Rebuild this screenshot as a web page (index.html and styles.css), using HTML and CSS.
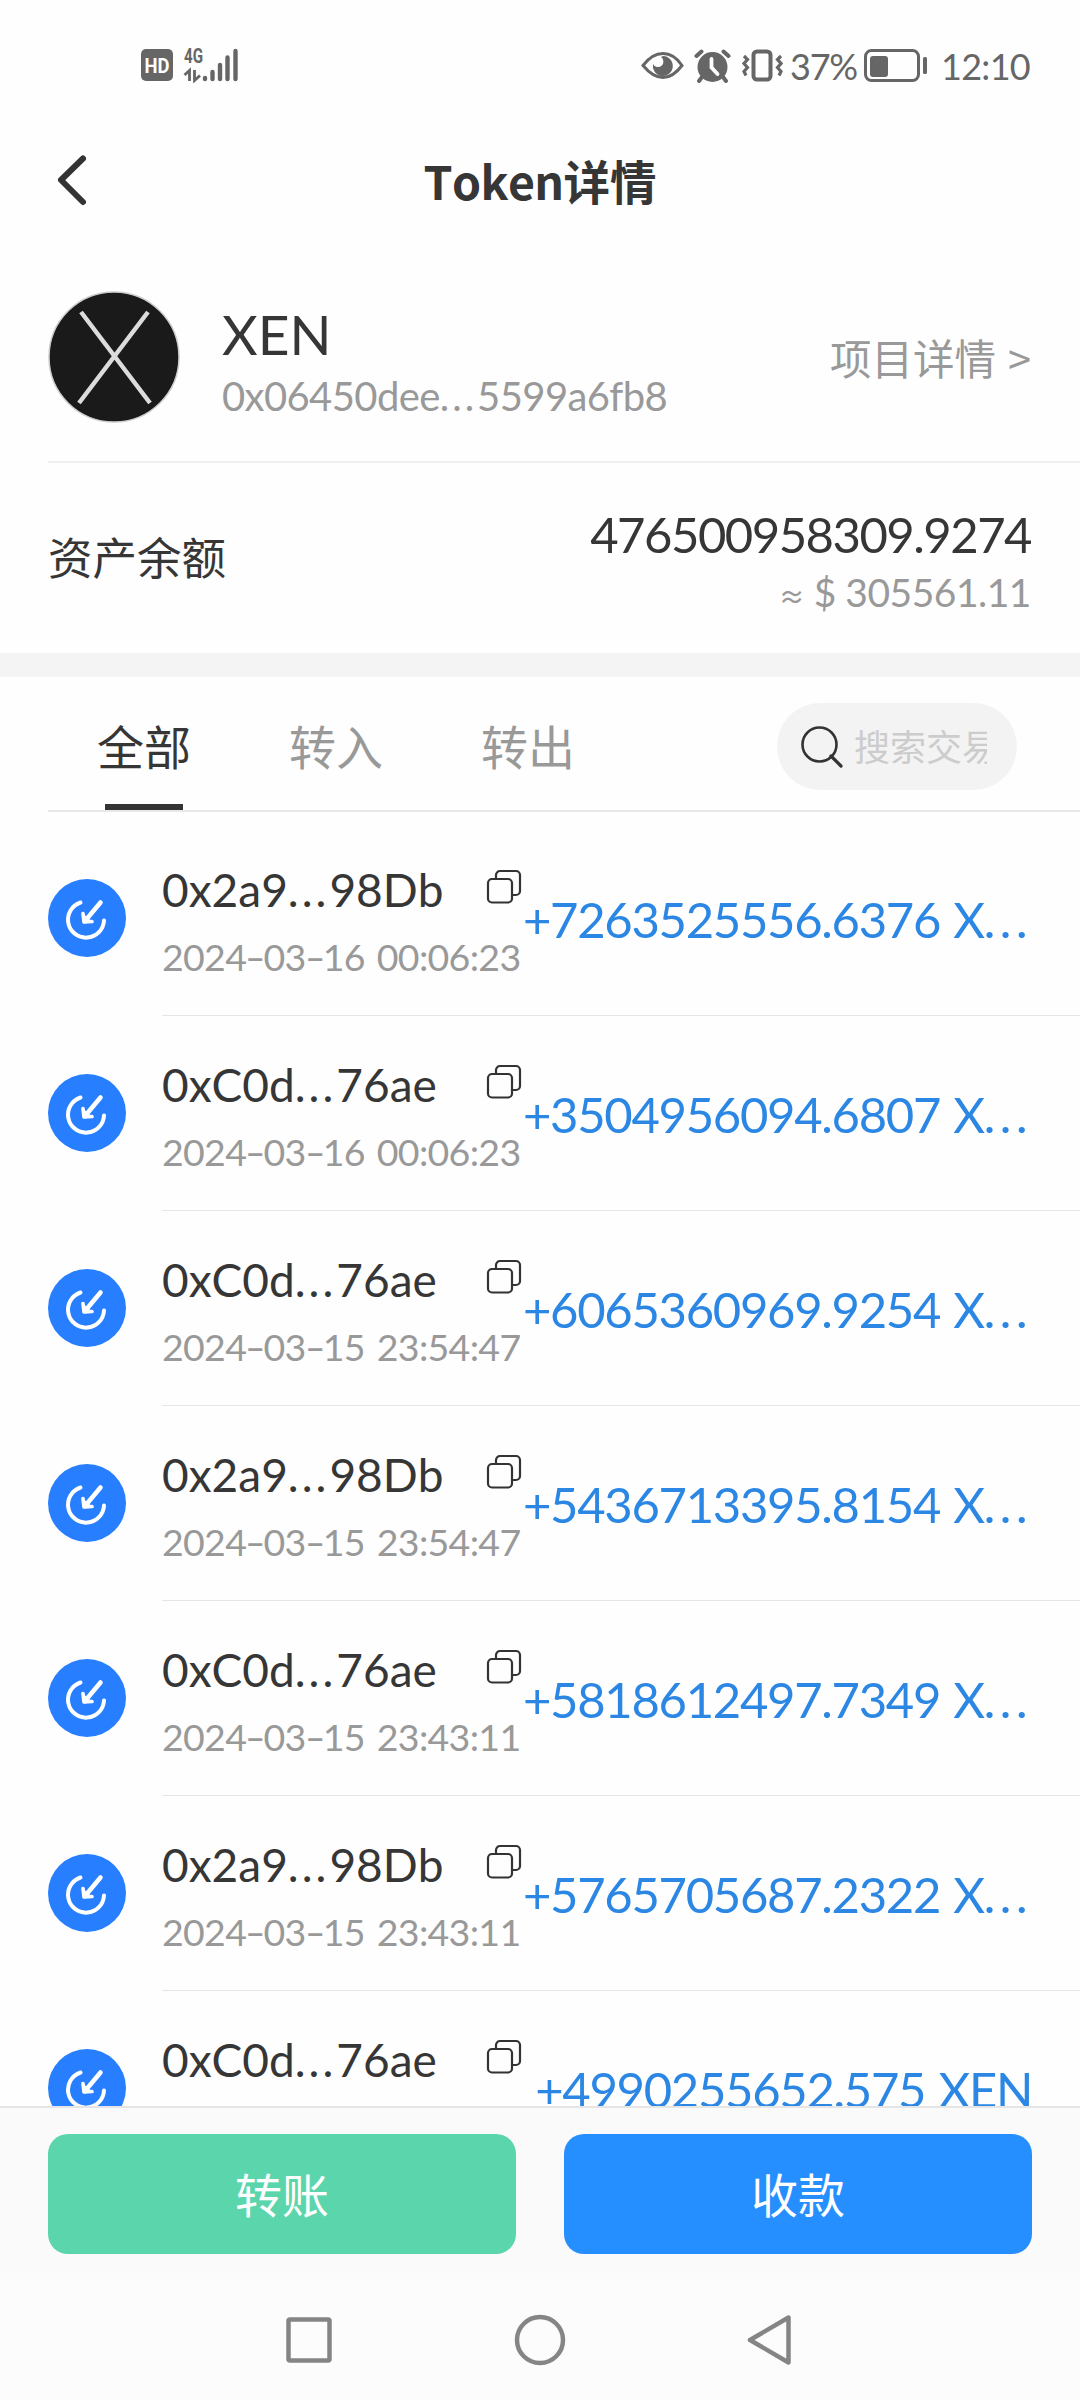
FILE: index.html
```html
<!DOCTYPE html>
<html lang="zh-CN">
<head>
  <meta charset="UTF-8" />
  <title>Token详情</title>
  <link rel="stylesheet" href="styles.css">
</head>
<body>
  <svg class="sprite" width="0" height="0">
    <symbol id="icon-in" viewBox="0 0 78 78">
      <circle cx="39" cy="39" r="39" fill="#277fff" />
      <path d="M32.5 23.5A18 18 0 1 0 56 41.500" fill="none" stroke="#fff" stroke-width="4" stroke-linecap="round" />
      <path d="M52.500 23.500L37 42" fill="none" stroke="#fff" stroke-width="4.500" stroke-linecap="round" />
      <path d="M35 34.500L36 43L44 42.500" fill="#fff" stroke="#fff" stroke-width="3.600" stroke-linecap="round" stroke-linejoin="round" />
    </symbol>
    <symbol id="icon-copy" viewBox="0 0 36 36">
      <g fill="none" stroke="#333" stroke-width="2.200">
        <rect x="2" y="10" width="24" height="23.500" rx="4" />
        <path d="M10 10V6a4 4 0 0 1 4-4h16a4 4 0 0 1 4 4v16a4 4 0 0 1-4 4h-4" />
      </g>
    </symbol>
  </svg>

  <div class="status-bar">
    <svg class="status-left" width="100" height="36" viewBox="0 0 100 36">
      <rect x="0" y="2" width="32" height="32" rx="5" fill="#666" />
      <text class="hd" x="3.500" y="25.500" textLength="25" lengthAdjust="spacingAndGlyphs">HD</text>
      <text class="net" x="43" y="16" textLength="19" lengthAdjust="spacingAndGlyphs">4G</text>
      <path d="M43.500 28L48.500 23.500V34M53.500 23V33.500L59 28.500" fill="none" stroke="#666" stroke-width="2.800" />
      <path d="M64 31v1M71.500 25v7M79 18v14M86.500 10.500v21.500M94.500 4v28" stroke="#666" stroke-width="4.400" stroke-linecap="round" />
    </svg>
    <div class="status-right">
      <svg width="142" height="36" viewBox="0 0 142 36">
        <path d="M2 18.500Q11 6.500 22 6.500T41 18.500Q32 30.500 22 30.500T2 18.500Z" fill="none" stroke="#666" stroke-width="3" />
        <path d="M22 9a10 10 0 1 1-10 8a5.500 5.500 0 1 0 8-7z" fill="#666" />
        <circle cx="71.500" cy="20" r="15" fill="#666" />
        <path d="M55.500 9L60.500 4.500M82.500 4.500L87.500 9M61 30L58 34M82 30L85 34" stroke="#666" stroke-width="4" stroke-linecap="round" />
        <path d="M70.500 12V20.500L76.500 27" fill="none" stroke="#fff" stroke-width="3.800" stroke-linecap="round" />
        <rect x="112.500" y="4.500" width="17" height="28" rx="3.500" fill="none" stroke="#666" stroke-width="4" />
        <path d="M103 9l3.500 3.500l-3.500 4l3.500 4l-3.500 4l2 4M140 9l-3.500 3.500l3.500 4l-3.500 4l3.500 4l-2 4" fill="none" stroke="#666" stroke-width="3.200" />
      </svg>
      <span class="percent">37%</span>
      <svg class="battery" width="64" height="36" viewBox="0 0 64 36">
        <rect x="1.500" y="3.500" width="53" height="30" rx="6" fill="none" stroke="#666" stroke-width="3" />
        <rect x="6" y="9" width="18" height="21" rx="3" fill="#666" />
        <rect x="59" y="10" width="4" height="17" rx="1.500" fill="#666" />
      </svg>
      <span class="clock">12:10</span>
    </div>
  </div>

  <div class="header">
    <svg class="back" width="32" height="54" viewBox="0 0 32 54">
      <path d="M27 5.500L5 27L27 49" fill="none" stroke="#333" stroke-width="6" stroke-linecap="round" stroke-linejoin="round" />
    </svg>
    <div class="title"><span class="title-en">Token</span>详情</div>
  </div>

  <div class="token">
    <svg class="logo" width="132" height="132" viewBox="0 0 132 132">
      <circle cx="66" cy="66" r="65" fill="#1a1a1a" stroke="#ccc" stroke-width="1.500" />
      <path d="M33 21L102 112M100 21L31 112" stroke="#dcdcdc" stroke-width="4.500" />
    </svg>
    <div class="token-info">
      <div class="token-name">XEN</div>
      <div class="token-address">0x06450dee<span class="dots">...</span>5599a6fb8</div>
    </div>
    <div class="project-link">项目详情<span class="gt">&gt;</span></div>
  </div>

  <div class="balance">
    <div class="balance-label">资产余额</div>
    <div class="balance-value">
      <div class="amount-total">476500958309.9274</div>
      <div class="amount-usd"><span class="approx">≈</span> $ 305561.11</div>
    </div>
  </div>

  <div class="tabs">
    <div class="tab active">全部</div>
    <div class="tab">转入</div>
    <div class="tab">转出</div>
    <div class="search">
      <svg width="44" height="44" viewBox="0 0 44 44">
        <path d="M31 31L41 41" stroke="#333" stroke-width="3.200" stroke-linecap="round" />
        <circle cx="19.500" cy="19.500" r="17" fill="none" stroke="#333" stroke-width="2.600" />
      </svg>
      <span class="placeholder">搜索交易</span>
    </div>
  </div>

  <div class="list">
    <div class="row">
      <svg class="row-icon"><use href="#icon-in" /></svg>
      <div class="row-body">
        <div class="row-info">
          <div class="row-top"><span class="address">0x2a9<span class="dots">...</span>98Db</span><svg class="copy"><use href="#icon-copy" /></svg></div>
          <div class="date">2024<i>-</i>03<i>-</i>16 00:06:23</div>
        </div>
        <div class="amount">+7263525556.6376 X<span class="dots">...</span></div>
      </div>
    </div>
    <div class="row">
      <svg class="row-icon"><use href="#icon-in" /></svg>
      <div class="row-body">
        <div class="row-info">
          <div class="row-top"><span class="address">0xC0d<span class="dots">...</span>76ae</span><svg class="copy"><use href="#icon-copy" /></svg></div>
          <div class="date">2024<i>-</i>03<i>-</i>16 00:06:23</div>
        </div>
        <div class="amount">+3504956094.6807 X<span class="dots">...</span></div>
      </div>
    </div>
    <div class="row">
      <svg class="row-icon"><use href="#icon-in" /></svg>
      <div class="row-body">
        <div class="row-info">
          <div class="row-top"><span class="address">0xC0d<span class="dots">...</span>76ae</span><svg class="copy"><use href="#icon-copy" /></svg></div>
          <div class="date">2024<i>-</i>03<i>-</i>15 23:54:47</div>
        </div>
        <div class="amount">+6065360969.9254 X<span class="dots">...</span></div>
      </div>
    </div>
    <div class="row">
      <svg class="row-icon"><use href="#icon-in" /></svg>
      <div class="row-body">
        <div class="row-info">
          <div class="row-top"><span class="address">0x2a9<span class="dots">...</span>98Db</span><svg class="copy"><use href="#icon-copy" /></svg></div>
          <div class="date">2024<i>-</i>03<i>-</i>15 23:54:47</div>
        </div>
        <div class="amount">+5436713395.8154 X<span class="dots">...</span></div>
      </div>
    </div>
    <div class="row">
      <svg class="row-icon"><use href="#icon-in" /></svg>
      <div class="row-body">
        <div class="row-info">
          <div class="row-top"><span class="address">0xC0d<span class="dots">...</span>76ae</span><svg class="copy"><use href="#icon-copy" /></svg></div>
          <div class="date">2024<i>-</i>03<i>-</i>15 23:43:11</div>
        </div>
        <div class="amount">+5818612497.7349 X<span class="dots">...</span></div>
      </div>
    </div>
    <div class="row">
      <svg class="row-icon"><use href="#icon-in" /></svg>
      <div class="row-body">
        <div class="row-info">
          <div class="row-top"><span class="address">0x2a9<span class="dots">...</span>98Db</span><svg class="copy"><use href="#icon-copy" /></svg></div>
          <div class="date">2024<i>-</i>03<i>-</i>15 23:43:11</div>
        </div>
        <div class="amount">+5765705687.2322 X<span class="dots">...</span></div>
      </div>
    </div>
    <div class="row">
      <svg class="row-icon"><use href="#icon-in" /></svg>
      <div class="row-body">
        <div class="row-info">
          <div class="row-top"><span class="address">0xC0d<span class="dots">...</span>76ae</span><svg class="copy"><use href="#icon-copy" /></svg></div>
        </div>
        <div class="amount">+4990255652.575 XEN</div>
      </div>
    </div>
  </div>

  <div class="actions">
    <button class="btn btn-send">转账</button>
    <button class="btn btn-receive">收款</button>
  </div>

  <div class="nav-bar">
    <svg width="52" height="52" viewBox="0 0 52 52"><rect x="5.500" y="5.500" width="41" height="41" rx="1.500" /></svg>
    <svg width="52" height="52" viewBox="0 0 52 52"><circle cx="26" cy="26" r="23" /></svg>
    <svg width="52" height="52" viewBox="0 0 52 52"><path d="M5 26L43.500 3.500V48.500Z" /></svg>
  </div>
</body>
</html>
```

FILE: styles.css
```css
* {
  box-sizing: border-box;
}

body {
  margin: 0;
  width: 1080px;
  height: 2400px;
  display: flex;
  flex-direction: column;
  overflow: hidden;
  font-family: Lato, "Noto Sans CJK SC", sans-serif;
  color: #363636;
  background: #fefefe;
  font-kerning: none;
  font-variant-ligatures: none;
}

svg {
  display: block;
  flex: none;
}

.sprite {
  height: 0;
}

/* status bar */
.status-bar {
  height: 130px;
  padding: 47px 51px 0 141px;
  display: flex;
  justify-content: space-between;
  align-items: flex-start;
  color: #666;
}

.hd {
  font: 700 21px Roboto, sans-serif;
  fill: #fff;
}

.net {
  font: 700 20px Roboto, sans-serif;
  fill: #666;
}

.status-right {
  display: flex;
  line-height: 39px;
  font-size: 36px;
}

.percent {
  width: 67px;
  margin-left: 7px;
  letter-spacing: -1.2px;
}

.battery {
  margin-left: 7px;
}

.clock {
  width: 88px;
  margin-left: 13px;
  letter-spacing: -0.7px;
}

/* header */
.header {
  height: 100px;
  padding: 0 56px;
  display: flex;
  align-items: center;
}

.title {
  flex: 1;
  margin-right: 32px;
  padding-top: 2px;
  text-align: center;
  font-size: 46.5px;
  font-weight: 700;
  line-height: 70px;
}

.title-en {
  font-family: "Noto Sans CJK SC", sans-serif;
  letter-spacing: -0.6px;
}

/* token info */
.token {
  height: 233px;
  margin-left: 48px;
  padding: 23px 49px 0 0;
  display: flex;
  align-items: center;
  border-bottom: 2px solid #f0f0f0;
}

.token-info {
  flex: 1;
  margin-left: 42px;
  padding-top: 12px;
}

.token-name {
  font-size: 55px;
  line-height: 66px;
}

.token-address {
  font-size: 40px;
  line-height: 59px;
  letter-spacing: -0.6px;
  color: #999;
}

.project-link {
  display: flex;
  gap: 12px;
  font-size: 41.5px;
  color: #999;
}

.gt {
  font-family: "Noto Sans CJK SC", sans-serif;
}

/* balance */
.balance {
  height: 214px;
  padding: 0 49px 0 48px;
  display: flex;
  justify-content: space-between;
  align-items: center;
  border-bottom: 24px solid #f4f4f4;
}

.balance-label {
  font-size: 44.5px;
  line-height: 64px;
}

.balance-value {
  padding-top: 5px;
  text-align: right;
}

.amount-total {
  font-size: 49px;
  line-height: 62px;
  letter-spacing: -1.5px;
}

.amount-usd {
  font-size: 39px;
  line-height: 54px;
  letter-spacing: -0.5px;
  color: #999;
}

.approx {
  font-family: "Noto Sans CJK SC", sans-serif;
  font-size: 26px;
  line-height: 1;
  font-weight: 500;
}

/* tabs */
.tabs {
  height: 135px;
  margin-left: 48px;
  padding: 0 63px 0 49px;
  display: flex;
  gap: 98px;
  border-bottom: 2px solid #e8e8e8;
}

.tab {
  height: 133px;
  display: flex;
  flex-direction: column;
  align-items: center;
  padding-top: 36px;
  font-size: 47px;
  line-height: 68px;
  color: #999;
}

.tab.active {
  color: #363636;
}

.tab.active::after {
  content: "";
  width: 78px;
  height: 6px;
  margin-top: 23px;
  background: #333;
}

.search {
  width: 240px;
  height: 87px;
  margin: 26px 0 0 auto;
  padding: 0 30px 0 23px;
  display: flex;
  align-items: center;
  gap: 10px;
  border-radius: 44px;
  background: #f3f3f3;
}

.placeholder {
  overflow: hidden;
  white-space: nowrap;
  width: 133px;
  font-size: 36px;
  line-height: 52px;
  color: #ccc;
}

/* transactions */
.list {
  flex: none;
  height: 1294px;
  padding-top: 9px;
  overflow: hidden;
}

.row {
  height: 195px;
  padding-left: 48px;
  display: flex;
  align-items: center;
}

.row-icon {
  width: 78px;
  height: 78px;
  margin-bottom: 1px;
}

.row-body {
  flex: 1;
  height: 195px;
  margin-left: 36px;
  padding-right: 49px;
  display: flex;
  justify-content: space-between;
  align-items: center;
  border-bottom: 1px solid #e6e6e6;
}

.row-info {
  width: 360px;
  height: 123px;
}

.row-top {
  display: flex;
  justify-content: space-between;
  line-height: 66px;
}

.address {
  font-size: 46px;
}

.copy {
  width: 36px;
  height: 36px;
  margin-top: 12px;
}

.date {
  font-size: 37.5px;
  line-height: 67px;
  color: #999;
  white-space: nowrap;
  letter-spacing: -0.7px;
  word-spacing: 3px;
}

.date i {
  display: inline-block;
  font-style: normal;
  transform: scaleX(1.5);
  margin: 0 2px;
}

.dots {
  letter-spacing: 3px;
}

.amount {
  margin-right: -1px;
  padding-top: 1px;
  font-size: 49px;
  line-height: 64px;
  letter-spacing: -1.3px;
  word-spacing: 2px;
  color: #2b87e3;
  white-space: nowrap;
}

.amount .dots {
  letter-spacing: 4.5px;
}

/* bottom buttons */
.actions {
  height: 173px;
  padding: 26px 48px 0;
  display: flex;
  gap: 48px;
  border-top: 2px solid #e5e5e5;
  background: #fafafa;
}

.btn {
  flex: 1;
  height: 120px;
  padding: 0 0 3px;
  border: none;
  border-radius: 20px;
  font-family: "Noto Sans CJK SC", sans-serif;
  font-size: 47px;
  color: #fff;
}

.btn-send {
  background: #5bd5ab;
}

.btn-receive {
  background: #268fff;
}

/* system navigation */
.nav-bar {
  flex: 1;
  padding: 35px 283px 0;
  display: flex;
  justify-content: space-between;
  background: #fcfcfc;
}

.nav-bar svg {
  fill: none;
  stroke: #858585;
  stroke-width: 4.5;
  stroke-linejoin: round;
}
```
